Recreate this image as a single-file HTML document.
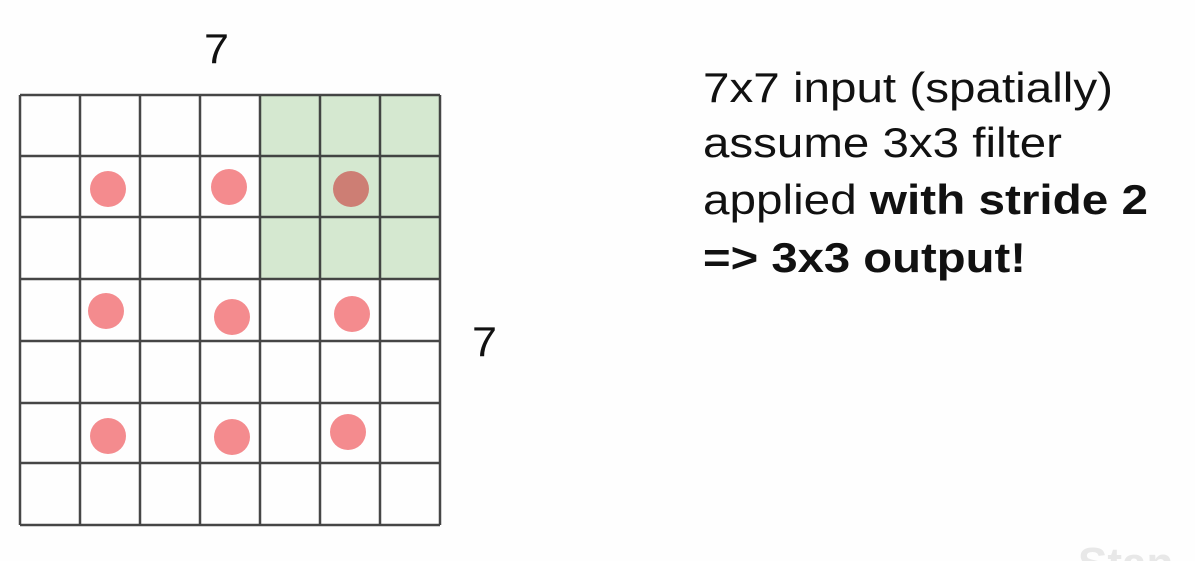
<!DOCTYPE html>
<html><head><style>
html,body{margin:0;padding:0;background:#fefefe;width:1195px;height:561px;overflow:hidden;}
</style></head><body>
<svg width="1195" height="561" xmlns="http://www.w3.org/2000/svg" style="display:block;overflow:hidden">
<rect width="1195" height="561" fill="#fefefe"/>
<rect x="260" y="95" width="180" height="184" fill="#d5e8d0"/>
<g stroke="#333" stroke-width="2.5" fill="none" opacity="0.9">
<line x1="20" y1="95" x2="20" y2="525"/>
<line x1="80" y1="95" x2="80" y2="525"/>
<line x1="140" y1="95" x2="140" y2="525"/>
<line x1="200" y1="95" x2="200" y2="525"/>
<line x1="260" y1="95" x2="260" y2="525"/>
<line x1="320" y1="95" x2="320" y2="525"/>
<line x1="380" y1="95" x2="380" y2="525"/>
<line x1="440" y1="95" x2="440" y2="525"/>
<line x1="20" y1="95" x2="440" y2="95"/>
<line x1="20" y1="156" x2="440" y2="156"/>
<line x1="20" y1="217" x2="440" y2="217"/>
<line x1="20" y1="279" x2="440" y2="279"/>
<line x1="20" y1="341" x2="440" y2="341"/>
<line x1="20" y1="403" x2="440" y2="403"/>
<line x1="20" y1="463" x2="440" y2="463"/>
<line x1="20" y1="525" x2="440" y2="525"/>
</g>
<g fill="#f48b8e">
<circle cx="108" cy="189" r="18"/>
<circle cx="229" cy="187" r="18"/>
<circle cx="106" cy="311" r="18"/>
<circle cx="232" cy="317" r="18"/>
<circle cx="352" cy="314" r="18"/>
<circle cx="108" cy="436" r="18"/>
<circle cx="232" cy="437" r="18"/>
<circle cx="348" cy="432" r="18"/>
</g>
<circle cx="351" cy="189" r="18" fill="#cd7e74"/>
<g font-family="Liberation Sans, Arial, sans-serif" font-size="42" fill="#111">
<text x="204" y="63" textLength="25" lengthAdjust="spacingAndGlyphs">7</text>
<text x="472" y="356" textLength="25" lengthAdjust="spacingAndGlyphs">7</text>
<text x="703" y="102" textLength="410" lengthAdjust="spacingAndGlyphs">7x7 input (spatially)</text>
<text x="703" y="157" textLength="359" lengthAdjust="spacingAndGlyphs">assume 3x3 filter</text>
<text x="703" y="214" textLength="445" lengthAdjust="spacingAndGlyphs">applied <tspan font-weight="bold">with stride 2</tspan></text>
<text x="703" y="272" font-weight="bold" textLength="323" lengthAdjust="spacingAndGlyphs">=&gt; 3x3 output!</text>
</g>
<text x="1078" y="578" font-family="Liberation Sans, sans-serif" font-size="44" font-weight="bold" fill="#e8e8e8">Stan</text>
</svg>
</body></html>
